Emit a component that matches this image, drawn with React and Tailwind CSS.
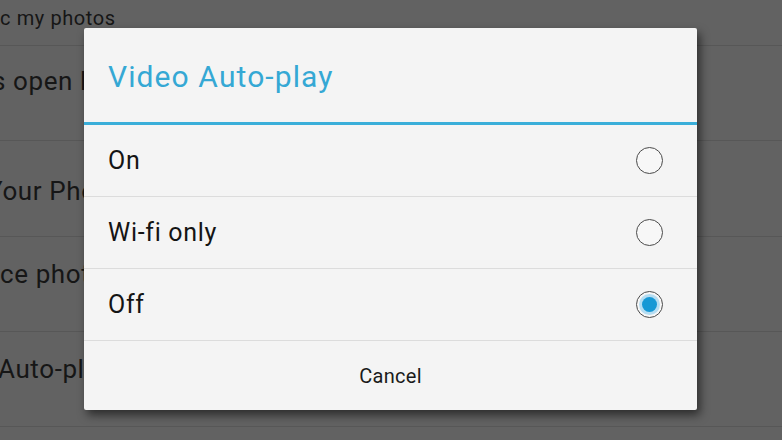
import { useState } from 'react';

// Android settings screen dimmed behind a single-choice dialog

const font = { fontFamily: 'Roboto, "Noto Sans", Arial, sans-serif' };

function Radio({ checked }) {
  return (
    <span className="flex h-[27px] w-[27px] items-center justify-center rounded-full border-[1.5px] border-[#4a4a4a] bg-[#f7f7f7]">
      {checked && (
        <span className="flex h-[21px] w-[21px] items-center justify-center rounded-full bg-[#b5ddf2]">
          <span className="h-[15px] w-[15px] rounded-full bg-[#1598d5]" />
        </span>
      )}
    </span>
  );
}

const options = ['On', 'Wi-fi only', 'Off'];

export default function App() {
  const [value, setValue] = useState('Off');

  return (
    <div className="relative h-[440px] w-[782px] overflow-hidden bg-[#626262] text-[#161616]" style={font}>
      {/* background list (dimmed) */}
      <div className="flex flex-col tracking-[0.6px]">
        <div className="h-[46px] border-b border-[#575757] pt-[6px] text-[20px] leading-[24px]">c my photos</div>
        <div className="h-[95px] border-b border-[#575757] pt-[20px] text-[26px] leading-[30px]">
          <span className="-ml-[8px] block">s open links</span>
        </div>
        <div className="h-[96px] border-b border-[#575757] pt-[35px] text-[26px] leading-[30px]">
          <span className="-ml-[13px] block">Your Photos</span>
        </div>
        <div className="h-[95px] border-b border-[#575757] pt-[22px] text-[26px] leading-[30px]">ce photos</div>
        <div className="h-[95px] border-b border-[#575757] pt-[22px] text-[26px] leading-[30px]">
          <span className="-ml-[2px] block">Auto-play</span>
        </div>
      </div>

      {/* dialog */}
      <div className="absolute left-[84px] top-[28px] flex h-[382px] w-[613px] flex-col rounded-[2px] bg-[#f4f4f4] shadow-[3px_5px_10px_rgba(0,0,0,0.55)]">
        <div className="h-[94px] pl-6 pt-[31px] text-[30px] leading-[36px] tracking-[1.1px] text-[#35a8d4]">Video Auto-play</div>
        <div className="h-[3px] bg-[#3aaed9]" />
        {options.map((o) => (
          <div
            key={o}
            onClick={() => setValue(o)}
            className="flex h-[72px] items-center justify-between border-b border-[#dcdcdc] pl-6 pr-[34px] text-[25px] tracking-[0.7px] text-[#141414]"
          >
            <span>{o}</span>
            <Radio checked={value === o} />
          </div>
        ))}
        <div className="flex flex-1 items-center justify-center text-[20px] tracking-[0.3px] text-[#1a1a1a]">Cancel</div>
      </div>
    </div>
  );
}
